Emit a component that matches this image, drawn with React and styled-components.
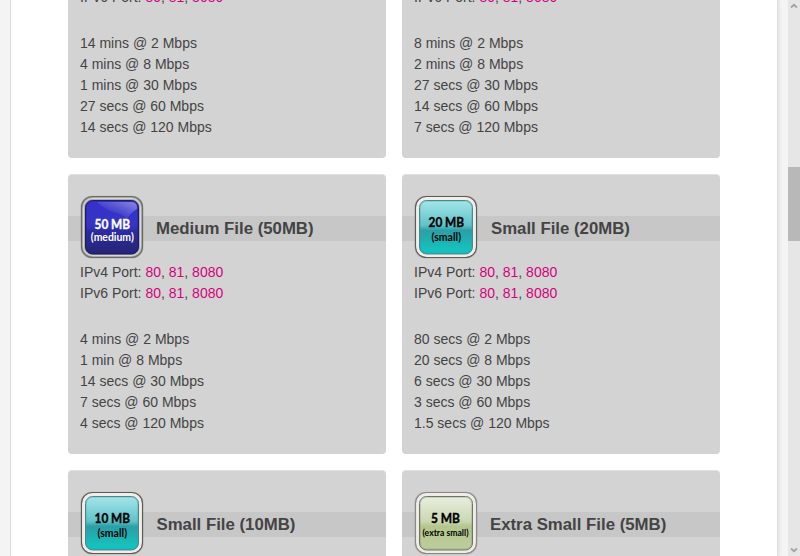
import React from "react";
import styled, { createGlobalStyle } from "styled-components";

const GlobalStyle = createGlobalStyle`
  html, body { margin: 0; overflow: hidden; }
  body {
    background: #f4f4f4;
    color: #444;
    font: 14px/21px "Liberation Sans", Arial, sans-serif;
  }
`;

const Shell = styled.div`
  display: flex;
  height: 556px;
  overflow: hidden;
`;

const Page = styled.main`
  box-sizing: border-box;
  width: 768px;
  height: 556px;
  margin-left: 10px;
  padding-left: 57px;
  overflow: hidden;
  background: #fff;
  border-left: 1px solid #dcdcdc;
  border-right: 1px solid #e0e0e0;
  box-shadow: 2px 0 2px rgba(0, 0, 0, 0.06);
`;

const Grid = styled.div`
  display: grid;
  grid-template-columns: 318px 318px;
  grid-auto-rows: 280px;
  gap: 16px;
  margin-top: -122px;
`;

const Card = styled.section`
  box-sizing: border-box;
  padding-top: 41px;
  background: #d3d3d3;
  border-top: 1px solid #e2e2e2;
  border-radius: 4px;
`;

const Band = styled.header`
  display: flex;
  align-items: center;
  height: 25px;
  padding-left: 12px;
  background: #c7c7c7;
`;

const Title = styled.h3`
  margin: 0 0 0 ${(p) => p.$gap}px;
  font-size: 16.8px;
  line-height: 25px;
  font-weight: bold;
  white-space: nowrap;
`;

const Details = styled.div`
  padding: 21px 12px 0;
`;

const Line = styled.div`
  white-space: nowrap;
`;

const Times = styled.div`
  margin-top: 25px;
`;

const PortLink = styled.a`
  color: #d6007f;
  text-decoration: none;
`;

const BadgeSvg = styled.svg`
  display: block;
  flex: none;
  width: 64px;
  height: 64px;
  margin-bottom: 3px;
`;

const BadgeText = styled.text`
  font-family: Lato, "Open Sans", sans-serif;
  font-weight: 700;
  font-size: ${(p) => p.$size}px;
  text-anchor: middle;
`;

const Scrollbar = styled.aside`
  display: flex;
  flex-direction: column;
  justify-content: space-between;
  align-items: center;
  width: 12px;
  height: 556px;
  margin-left: auto;
  background: #e6e6e6;
`;

const Thumb = styled.div`
  width: 12px;
  height: 74px;
  margin: 157px 0 305px;
  background: #b8b8b8;
`;

const Arrow = styled.svg`
  display: block;
  width: 12px;
  height: 10px;
`;

const PALETTES = {
  blue: { frame: "#a9a9a6", edge: "#6b6b69", stops: ["#3431c8", "#3634c6", "#2d2ba6", "#27267c"], text: "#fff", rim: "#1d1c66" },
  teal: { frame: "#f1eeea", edge: "#5d5a58", stops: ["#a5e5ea", "#60c4ca", "#2b9fa6", "#16c0bd"], text: "#000", rim: "#4a8a8e" },
  green: { frame: "#efebe9", edge: "#8c8886", stops: ["#e9eee0", "#ccd8b2", "#b4c68c", "#bccb9b"], text: "#000", rim: "#6d765f" },
};

const NOTES = {
  medium: { size: 10.6, width: 43, y: 46 },
  small: { size: 10.8, width: 29.5, y: 46.3 },
  "extra small": { size: 9.2, width: 46, y: 44.5 },
};

function Badge({ tone, size, note }) {
  const p = PALETTES[tone];
  const caption = NOTES[note];
  const id = `badge-${size.replace(" ", "")}`;
  const [top, middle, low, bottom] = p.stops;
  const cx = tone === "green" ? 31.5 : 32.3;
  return (
    <BadgeSvg viewBox="0 0 64 64">
      <defs>
        <linearGradient id={id} x1="0" y1="0" x2="0" y2="1">
          <stop offset="0" stopColor={top} />
          <stop offset="0.46" stopColor={middle} />
          <stop offset="0.56" stopColor={low} />
          <stop offset="0.9" stopColor={bottom} />
          <stop offset="1" stopColor={bottom} />
        </linearGradient>
        <linearGradient id={`${id}-shine`} x1="0" y1="1" x2="1" y2="0">
          <stop offset="0.3" stopColor="#fff" stopOpacity="0" />
          <stop offset="1" stopColor="#fff" stopOpacity="0.42" />
        </linearGradient>
      </defs>
      <rect x="0.5" y="0.7" width="63" height="62.8" rx="11" fill="#000" opacity="0.13" />
      <rect x="1.5" y="1.5" width="61" height="61" rx="11" fill={p.frame} stroke={p.edge} strokeWidth="1.1" />
      {tone === "blue" && (
        <rect x="3.6" y="3.6" width="56.8" height="56.8" rx="8.5" fill="none" stroke="#dededa" strokeWidth="1" />
      )}
      <rect x="5.5" y="5.5" width="53" height="53.5" rx="7" fill={`url(#${id})`} stroke={p.rim} strokeWidth="1" />
      <rect x="6.5" y="6.5" width="51" height="51.5" rx="6" fill="none" stroke={p.rim} strokeOpacity="0.25" />
      {tone === "blue" && (
        <path d="M17 7H51Q57 7 57 12V14Q50 18 47 24Q45 20 33 17Q24 14 17 7Z" fill={`url(#${id}-shine)`} />
      )}
      <BadgeText
        x={cx}
        y={tone === "blue" ? 33.8 : 31.8}
        $size={12.5}
        fill={p.text}
        stroke={p.text}
        strokeWidth="0.35"
        textLength={size === "5 MB" ? 29 : 35.5}
        lengthAdjust="spacingAndGlyphs"
      >
        {size}
      </BadgeText>
      <BadgeText
        x={cx}
        y={caption.y}
        $size={caption.size}
        fill={p.text}
        textLength={caption.width}
        lengthAdjust="spacingAndGlyphs"
      >
        ({note})
      </BadgeText>
    </BadgeSvg>
  );
}

function Ports({ label }) {
  return (
    <Line>
      {label} Port: <PortLink>80</PortLink>, <PortLink>81</PortLink>, <PortLink>8080</PortLink>
    </Line>
  );
}

const FILES = [
  { times: ["14 mins @ 2 Mbps", "4 mins @ 8 Mbps", "1 mins @ 30 Mbps", "27 secs @ 60 Mbps", "14 secs @ 120 Mbps"] },
  { times: ["8 mins @ 2 Mbps", "2 mins @ 8 Mbps", "27 secs @ 30 Mbps", "14 secs @ 60 Mbps", "7 secs @ 120 Mbps"] },
  { title: "Medium File (50MB)", gap: 12, tone: "blue", size: "50 MB", note: "medium", times: ["4 mins @ 2 Mbps", "1 min @ 8 Mbps", "14 secs @ 30 Mbps", "7 secs @ 60 Mbps", "4 secs @ 120 Mbps"] },
  { title: "Small File (20MB)", gap: 13, tone: "teal", size: "20 MB", note: "small", times: ["80 secs @ 2 Mbps", "20 secs @ 8 Mbps", "6 secs @ 30 Mbps", "3 secs @ 60 Mbps", "1.5 secs @ 120 Mbps"] },
  { title: "Small File (10MB)", gap: 12.5, tone: "teal", size: "10 MB", note: "small", times: [] },
  { title: "Extra Small File (5MB)", gap: 12, tone: "green", size: "5 MB", note: "extra small", times: [] },
];

export default function App() {
  return (
    <>
      <GlobalStyle />
      <Shell>
        <Page>
          <Grid>
            {FILES.map((file, i) => (
              <Card key={i}>
                <Band>
                  {file.title && (
                    <>
                      <Badge tone={file.tone} size={file.size} note={file.note} />
                      <Title $gap={file.gap}>{file.title}</Title>
                    </>
                  )}
                </Band>
                <Details>
                  <Ports label="IPv4" />
                  <Ports label="IPv6" />
                  <Times>
                    {file.times.map((time) => (
                      <Line key={time}>{time}</Line>
                    ))}
                  </Times>
                </Details>
              </Card>
            ))}
          </Grid>
        </Page>
        <Scrollbar>
          <Arrow viewBox="0 0 12 10">
            <path d="M3 7.5 6 4.8 9 7.5" fill="none" stroke="#a3a3a3" strokeWidth="1.8" />
          </Arrow>
          <Thumb />
          <Arrow viewBox="0 0 12 10">
            <path d="M3 2.5 6 5.2 9 2.5" fill="none" stroke="#a3a3a3" strokeWidth="1.8" />
          </Arrow>
        </Scrollbar>
      </Shell>
    </>
  );
}
